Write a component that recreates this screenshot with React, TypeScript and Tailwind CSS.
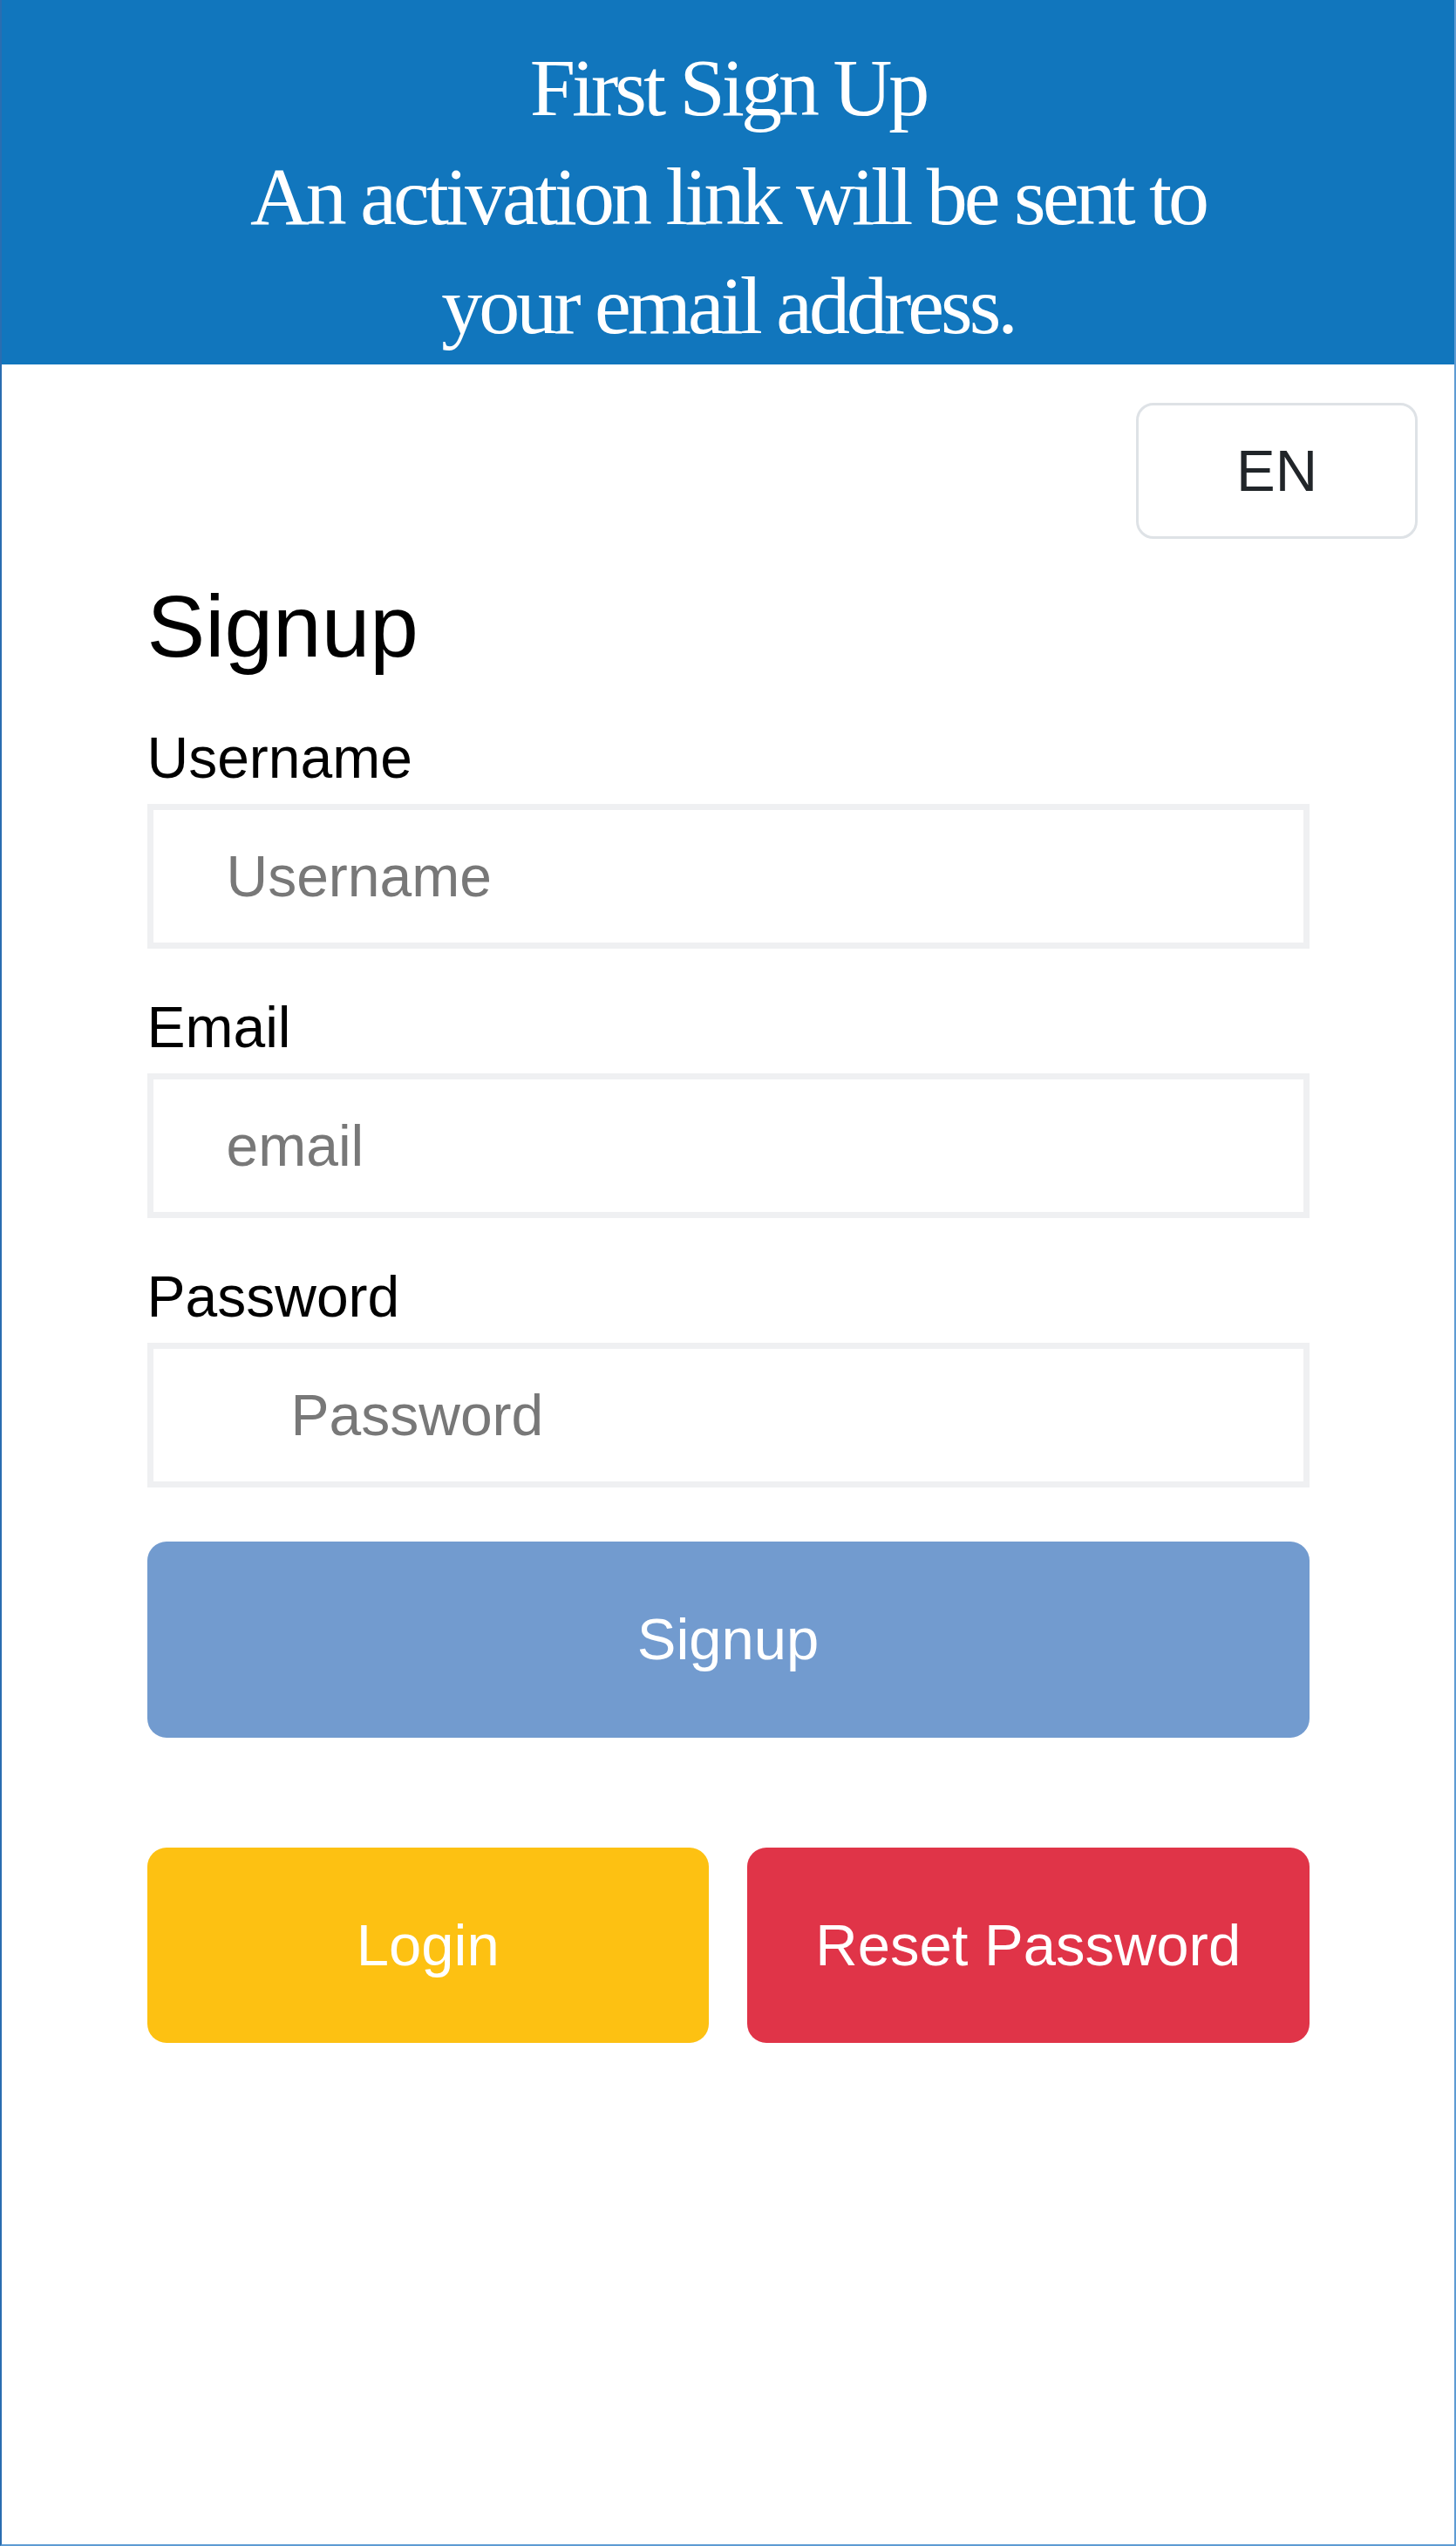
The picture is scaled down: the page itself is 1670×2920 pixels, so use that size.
export default function App() {
    const fields = [
        { label: 'Username', placeholder: 'Username', type: 'text', pad: 'pl-[84px]' },
        { label: 'Email', placeholder: 'email', type: 'email', pad: 'pl-[84px]' },
        { label: 'Password', placeholder: 'Password', type: 'password', pad: 'pl-[158px]' },
    ];

    return (
        <div className="min-h-screen bg-white border-l-2 border-l-[#2a6db0] border-r-2 border-r-[#5d9bd3] border-b-2 border-b-[#5d9bd3] font-['Liberation_Sans',Arial,sans-serif]">
            {/* HEADER */}
            <header className="bg-[#1176bd] pt-[38px] pb-[5px] text-center text-white font-['Liberation_Serif','Times_New_Roman',serif] text-[94px] leading-[125px] tracking-[-4px]">
                <div>First Sign Up</div>
                <div>An activation link will be sent to</div>
                <div>your email address.</div>
            </header>

            {/* LANGUAGE */}
            <div className="flex justify-end pt-[44px] pr-[42px]">
                <button className="w-[323px] h-[156px] rounded-[20px] border-[3px] border-[#dee2e6] bg-white text-[67px] text-[#212529]">
                    EN
                </button>
            </div>

            {/* FORM */}
            <div className="mx-auto w-[1333px] mt-[40px]">
                <h1 className="text-[100px] leading-[120px] text-black">Signup</h1>

                <div className="mt-[53px] flex flex-col gap-[52px]">
                    {fields.map((f) => (
                        <div key={f.label} className="flex flex-col">
                            <label className="text-[66px] leading-[77px] mb-[14px] text-black">
                                {f.label}
                            </label>
                            <input
                                type={f.type}
                                placeholder={f.placeholder}
                                className={`h-[166px] w-full border-[7px] border-[#eff0f2] bg-white text-[66px] text-black placeholder:text-[#787878] outline-none ${f.pad}`}
                            />
                        </div>
                    ))}
                </div>

                <button className="mt-[62px] w-full h-[225px] rounded-[22px] bg-[#729bcf] text-[67px] text-white">
                    Signup
                </button>

                <div className="mt-[126px] grid grid-cols-2 gap-[44px]">
                    <button className="h-[224px] rounded-[22px] bg-[#fdc112] text-[67px] text-white">
                        Login
                    </button>
                    <button className="h-[224px] rounded-[22px] bg-[#e03448] text-[67px] text-white">
                        Reset Password
                    </button>
                </div>
            </div>
        </div>
    );
}
